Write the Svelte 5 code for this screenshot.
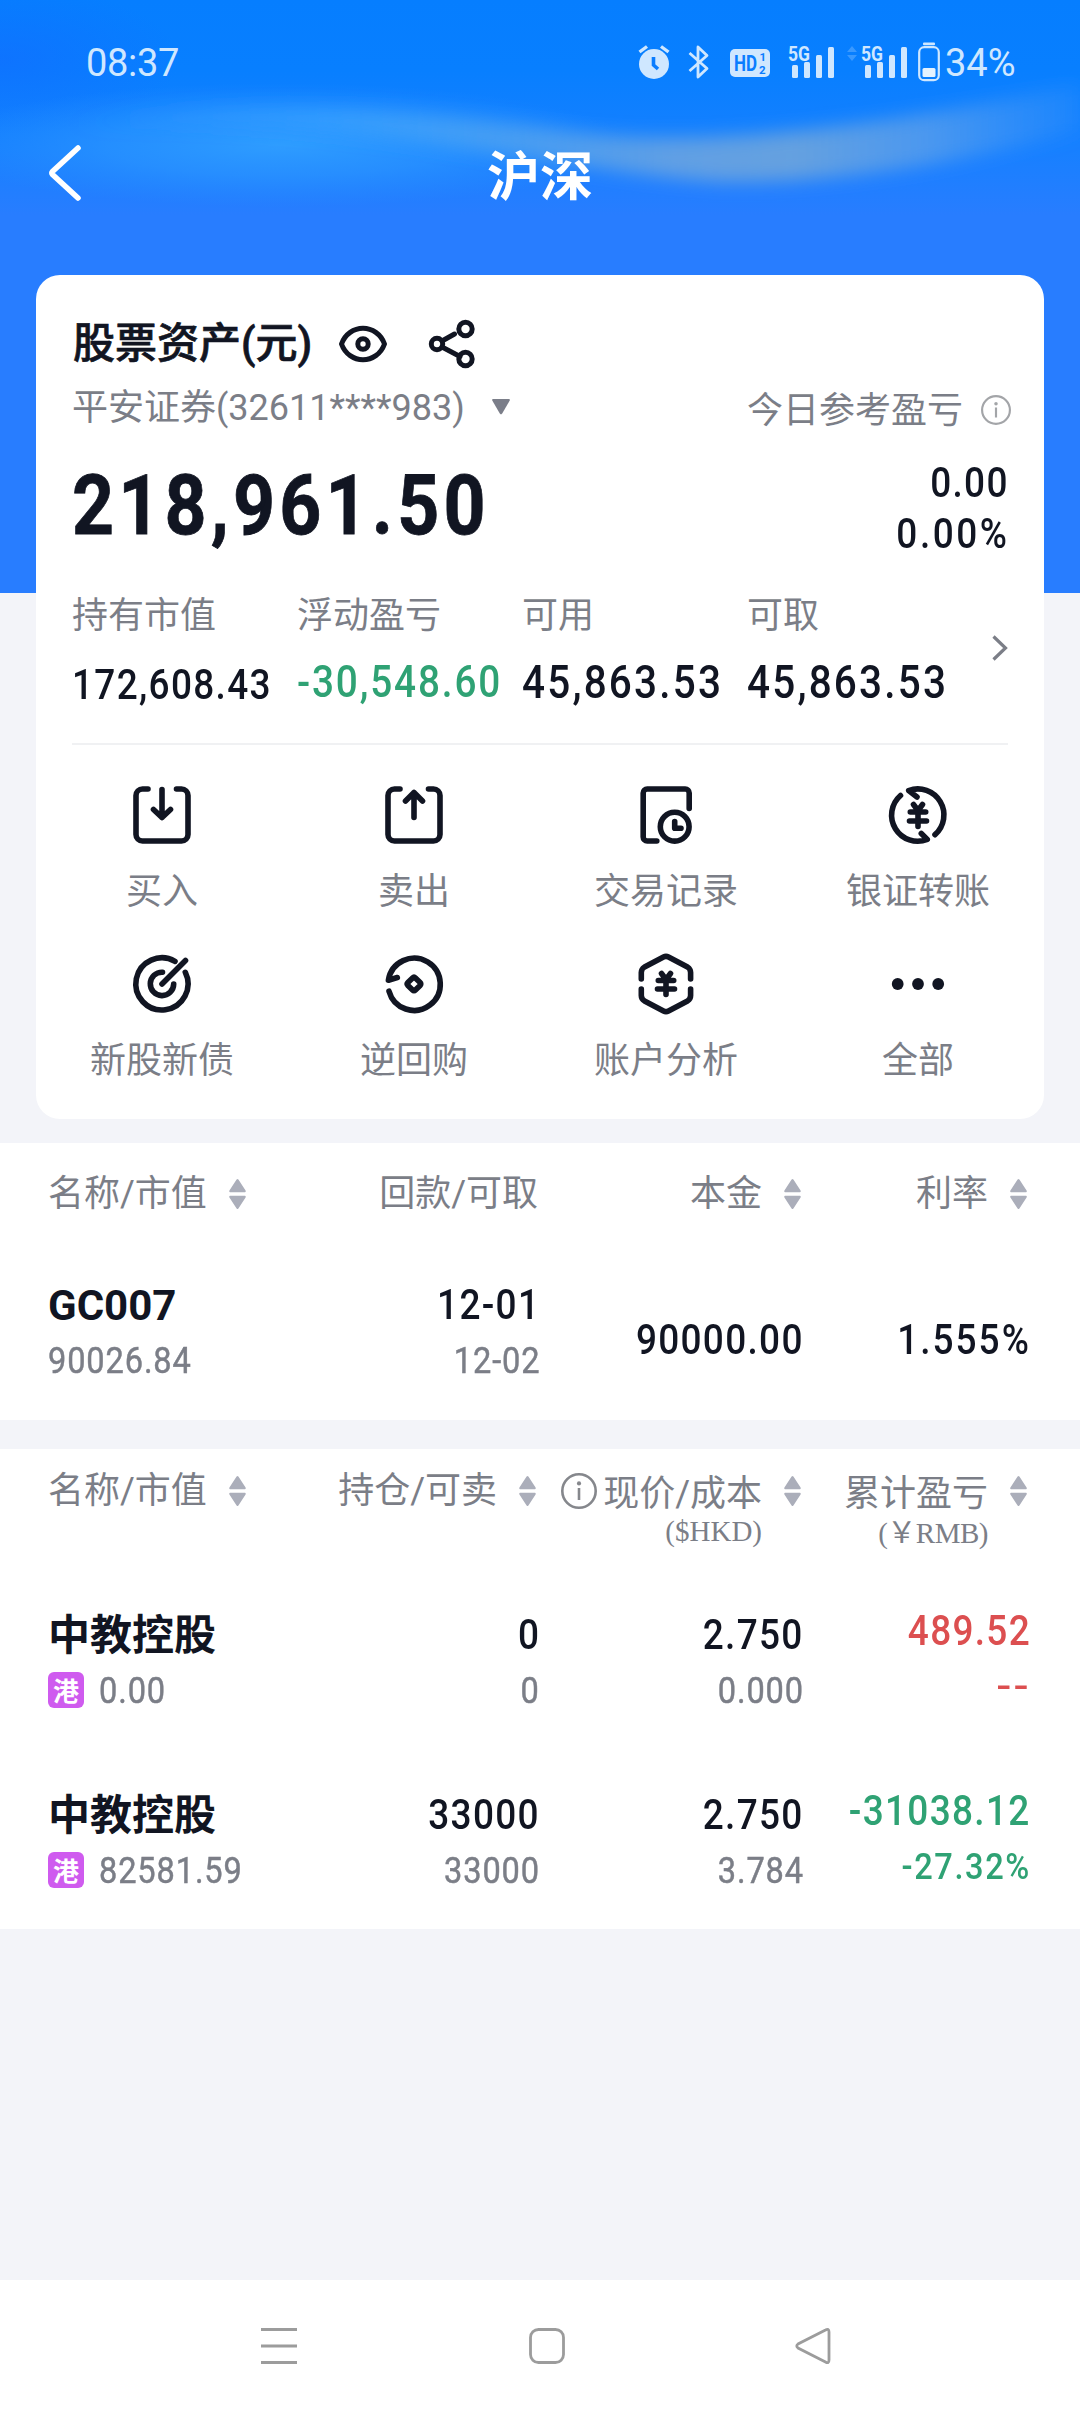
<script>
  const metrics = [
    { label: '持有市值', value: '172,608.43', size: 'small' },
    { label: '浮动盈亏', value: '-30,548.60', size: 'medium green' },
    { label: '可用', value: '45,863.53', size: 'large' },
    { label: '可取', value: '45,863.53', size: 'large' }
  ];

  const actions = [
    { icon: 'buy', label: '买入' },
    { icon: 'sell', label: '卖出' },
    { icon: 'record', label: '交易记录' },
    { icon: 'transfer', label: '银证转账' },
    { icon: 'target', label: '新股新债' },
    { icon: 'repo', label: '逆回购' },
    { icon: 'analysis', label: '账户分析' },
    { icon: 'more', label: '全部' }
  ];

  const holdings = [
    { name: '中教控股', value: '0.00', qty: '0', avail: '0', price: '2.750', cost: '0.000', pl: '489.52', rate: '--', tone: 'red' },
    { name: '中教控股', value: '82581.59', qty: '33000', avail: '33000', price: '2.750', cost: '3.784', pl: '-31038.12', rate: '-27.32%', tone: 'green' }
  ];
</script>

{#snippet sort()}
  <svg class="sort" width="17" height="30" viewBox="0 0 17 30">
    <path d="M7.6.6Q8.5-.5 9.4.6L16.6 11.6Q17.2 13.2 16 13.2H1Q-.2 13.2.4 11.6ZM7.6 29.4Q8.5 30.5 9.4 29.4L16.6 18.4Q17.2 16.8 16 16.8H1Q-.2 16.8.4 18.4Z" />
  </svg>
{/snippet}

{#snippet signal()}
  <svg class="signal" width="47" height="34" viewBox="0 0 47 34">
    <text x="0" y="16" textLength="22" lengthAdjust="spacingAndGlyphs">5G</text>
    <g fill="currentColor">
      <rect x="4" y="20" width="6" height="13" rx="1.5" />
      <rect x="16" y="17" width="6" height="16" rx="1.5" />
      <rect x="28" y="10" width="6" height="23" rx="1.5" />
      <rect x="40" y="2" width="6" height="31" rx="1.5" />
    </g>
  </svg>
{/snippet}

{#snippet info(size)}
  <svg class="info" width={size} height={size} viewBox="0 0 36 36">
    <circle cx="18" cy="18" r="16.7" />
    <path d="M18 15V27" />
    <circle class="dot" cx="18" cy="10.4" r="2.1" />
  </svg>
{/snippet}

<div class="screen">
  <header>
    <svg class="wave" width="1080" height="593" viewBox="0 0 1080 593">
      <defs>
        <linearGradient id="streak" x1="0" x2="1">
          <stop offset="0" stop-color="#39a5ff" stop-opacity="0" />
          <stop offset=".25" stop-color="#3fa8ff" stop-opacity=".5" />
          <stop offset=".6" stop-color="#78aadc" stop-opacity=".75" />
          <stop offset=".72" stop-color="#78a9d8" stop-opacity=".8" />
          <stop offset=".85" stop-color="#62a2e8" stop-opacity=".7" />
          <stop offset="1" stop-color="#4a9cf6" stop-opacity=".2" />
        </linearGradient>
        <radialGradient id="glow">
          <stop offset="0" stop-color="#31a0ff" stop-opacity=".9" />
          <stop offset=".5" stop-color="#2d98ff" stop-opacity=".6" />
          <stop offset="1" stop-color="#2890ff" stop-opacity="0" />
        </radialGradient>
        <radialGradient id="corner">
          <stop offset="0" stop-color="#1568ff" stop-opacity=".5" />
          <stop offset="1" stop-color="#1568ff" stop-opacity="0" />
        </radialGradient>
        <filter id="soft" x="-10%" y="-80%" width="120%" height="260%"><feGaussianBlur stdDeviation="9" /></filter>
      </defs>
      <ellipse cx="0" cy="60" rx="180" ry="75" fill="url(#corner)" />
      <ellipse cx="280" cy="145" rx="350" ry="62" fill="url(#glow)" />
      <path d="M60 126C220 94 400 108 560 130C680 148 850 134 1080 84L1080 130C980 160 840 184 720 182C600 174 480 146 340 132Q200 120 60 126Z" fill="url(#streak)" filter="url(#soft)" />
    </svg>

    <div class="status">
      <span class="time">08:37</span>
      <svg class="alarm" width="32" height="36" viewBox="0 0 32 36">
        <circle cx="16" cy="20" r="15" fill="currentColor" />
        <path d="M1.5 8 9 2.5M30.5 8 23 2.5" stroke="currentColor" stroke-width="3.4" />
        <path d="M15.5 13V21L20 25" fill="none" stroke="#0a7dff" stroke-width="3.6" />
      </svg>
      <svg class="bluetooth" width="22" height="36" viewBox="0 0 22 36">
        <path d="M1.5 9 19 24.5 10 33V3L19 11.5 1.5 27" fill="none" stroke="currentColor" stroke-width="2.8" stroke-linejoin="round" />
      </svg>
      <svg class="hd" width="40" height="28" viewBox="0 0 40 28">
        <rect width="40" height="28" rx="5" fill="currentColor" />
        <text x="4" y="22" font-size="22" textLength="23" lengthAdjust="spacingAndGlyphs">HD</text>
        <text x="29.5" y="12" font-size="11.5">1</text>
        <text x="29" y="25" font-size="11.5">2</text>
      </svg>
      {@render signal()}
      <svg class="traffic" width="10" height="36" viewBox="0 0 10 36">
        <path d="M5 2 10 8H0ZM5 17 10 11H0Z" fill="currentColor" opacity=".25" />
      </svg>
      {@render signal()}
      <svg class="battery" width="22" height="40" viewBox="0 0 22 40">
        <rect x="1.2" y="5.2" width="19.6" height="33" rx="5" fill="none" stroke="currentColor" stroke-width="2.2" />
        <rect x="5" y=".5" width="12" height="2.8" rx="1" fill="currentColor" />
        <rect x="4.5" y="26" width="13" height="9" rx="1.5" fill="#e4f2ff" />
      </svg>
      <span class="percent">34%</span>
    </div>

    <div class="titlebar">
      <svg width="34" height="58" viewBox="0 0 34 58">
        <path d="M30 4 4.5 27.5Q3 29 4.5 30.5L30 54" />
      </svg>
      <h1>沪深</h1>
    </div>
  </header>

  <section class="card">
    <div class="heading">
      <h2>股票资产(元)</h2>
      <svg class="line eye" width="48" height="38" viewBox="0 0 48 38">
        <path d="M2.5 19C6 9 15 3.2 24 3.2S42 9 45.500 19C42 29 33 34.800 24 34.800S6 29 2.500 19Z" />
        <circle cx="24" cy="19" r="5.200" />
      </svg>
      <svg class="line" width="46" height="48" viewBox="0 0 46 48">
        <circle cx="8" cy="24" r="5.700" />
        <circle cx="36.500" cy="9" r="6.700" />
        <circle cx="36.500" cy="39" r="6.700" />
        <path d="M13 21 25.500 14M13 27 31 36.500" />
      </svg>
    </div>

    <div class="account">
      <span class="broker">平安证券(32611****983)</span>
      <svg width="18" height="16" viewBox="0 0 18 16"><path d="M1.200 0H16.800Q18.500 0 17.600 1.800L10.200 14.600Q9 16.200 7.800 14.600L.4 1.800Q-.5 0 1.200 0Z" fill="#7b7e89" /></svg>
      <span class="today">今日参考盈亏</span>
      {@render info(30)}
    </div>

    <div class="total">
      <strong>218,961.50</strong>
      <div class="num"><div>0.00</div><div class="pct">0.00%</div></div>
    </div>

    <div class="metrics">
      {#each metrics as m}
        <div>
          <div class="label">{m.label}</div>
          <div class="num {m.size}">{m.value}</div>
        </div>
      {/each}
      <svg width="16" height="26" viewBox="0 0 16 26"><path d="M1.500 1.500 13.500 13 1.500 24.500" /></svg>
    </div>

    <div class="actions">
      {#each actions as a}
        <div class="action">
          <svg class="line" width="58" height="58" viewBox="0 0 58 58">
            {#if a.icon === 'buy'}
              <path d="M15 3H9.500A6.500 6.500 0 0 0 3 9.500V48.500A6.500 6.500 0 0 0 9.500 55H48.500A6.500 6.500 0 0 0 55 48.500V9.500A6.500 6.500 0 0 0 48.500 3H43.500M29 3.500V31.500M20.500 23.500 29 31.500 37.500 23.500" />
            {:else if a.icon === 'sell'}
              <path d="M15 3H9.500A6.500 6.500 0 0 0 3 9.500V48.500A6.500 6.500 0 0 0 9.500 55H48.500A6.500 6.500 0 0 0 55 48.500V9.500A6.500 6.500 0 0 0 48.500 3H43.500M29 31.500V6.500M20.500 15 29 6.500 37.500 15" />
            {:else if a.icon === 'record'}
              <path d="M19.800 55H10.200A4 4 0 0 1 6.200 51V7A4 4 0 0 1 10.200 3H48.200A4 4 0 0 1 52.200 7V22.500M37.700 35.500V42.300H44" />
              <circle cx="37.700" cy="40.700" r="14.400" />
            {:else if a.icon === 'transfer'}
              <path d="M11.500 9.500A26.100 26.100 0 0 0 38.300 53.400L32.300 47.500M46 48.700A26.100 26.100 0 0 0 19.700 4.600L28 11" />
              <path d="M24.500 18.500 29 24.500 33.500 18.500M21.300 26H36.700M20.500 35H37.500M29 26V40.500" />
            {:else if a.icon === 'target'}
              <path d="M42 6.300A26.100 26.100 0 1 0 52.300 17.300M29.500 17.200A11.700 11.700 0 1 0 40.700 29M29 29 52.500 5.500" />
            {:else if a.icon === 'repo'}
              <path d="M4 36.200A26.100 26.100 0 1 0 3.400 25.200L12.300 22.500" />
              <path d="M27.600 22.900Q29 21.500 30.400 22.900L35.100 27.600Q36.500 29 35.100 30.400L30.400 35.100Q29 36.500 27.600 35.100L22.900 30.400Q21.500 29 22.900 27.600Z" />
            {:else if a.icon === 'analysis'}
              <path d="M4.300 24V17.500Q4.300 14 7.500 12L26.500 2Q29 .7 31.500 2L50.500 12Q53.600 14 53.600 17.500V24M4.300 34V40.500Q4.300 44 7.500 46L26.500 56Q29 57.300 31.500 56L50.500 46Q53.600 44 53.600 40.500V34" />
              <path d="M24.500 18.500 29 24.500 33.500 18.500M21.300 25.500H36.700M20.500 34H37.500M29 26V39.500" />
            {:else}
              <g fill="#111522" stroke="none"><circle cx="8.700" cy="29" r="5.900" /><circle cx="29" cy="29" r="5.900" /><circle cx="49.200" cy="29" r="5.900" /></g>
            {/if}
          </svg>
          <span>{a.label}</span>
        </div>
      {/each}
    </div>
  </section>

  <section class="table repo">
    <div class="row head">
      <div><span>名称/市值</span>{@render sort()}</div>
      <div>回款/可取</div>
      <div><span>本金</span>{@render sort()}</div>
      <div><span>利率</span>{@render sort()}</div>
    </div>
    <div class="row body">
      <div><b class="code">GC007</b><small>90026.84</small></div>
      <div class="end"><span>12-01</span><small>12-02</small></div>
      <div class="end mid"><span>90000.00</span></div>
      <div class="end mid"><span class="pct">1.555%</span></div>
    </div>
  </section>

  <section class="table stocks">
    <div class="row head">
      <div><span>名称/市值</span>{@render sort()}</div>
      <div class="shift"><span>持仓/可卖</span>{@render sort()}</div>
      <div>
        {@render info(36)}
        <span class="unit">现价/成本<i>($HKD)</i></span>{@render sort()}
      </div>
      <div><span class="unit">累计盈亏<i class="lower">(￥RMB)</i></span>{@render sort()}</div>
    </div>
    {#each holdings as h}
      <div class="row body">
        <div><b>{h.name}</b><div class="tagged"><em>港</em><small>{h.value}</small></div></div>
        <div class="end"><span>{h.qty}</span><small>{h.avail}</small></div>
        <div class="end"><span>{h.price}</span><small>{h.cost}</small></div>
        <div class="end profit {h.tone}"><span>{h.pl}</span><small class:dashes={h.rate === '--'}>{h.rate}</small></div>
      </div>
    {/each}
  </section>

  <nav>
    <svg width="36" height="38" viewBox="0 0 36 38"><path d="M0 2.500H36M0 19H36M0 35.500H36" /></svg>
    <svg width="36" height="38" viewBox="0 0 36 38"><rect x="1.500" y="2.500" width="33" height="33" rx="8" /></svg>
    <svg width="36" height="38" viewBox="0 0 36 38"><path d="M34 5Q34 1 30.500 3L3 17Q.5 19 3 21L30.500 35Q34 37 34 33Z" /></svg>
  </nav>
</div>

<style>
  :global(body) {
    background: #f3f4f9;
  }
  .screen {
    width: 1080px;
    height: 2412px;
    display: flex;
    flex-direction: column;
    overflow: hidden;
    background: #f3f4f9;
    color: #111522;
    font-family: Roboto, 'Noto Sans CJK SC', sans-serif;
  }
  svg {
    display: block;
    flex: none;
    overflow: visible;
  }
  h1,
  h2 {
    margin: 0;
  }

  header {
    position: relative;
    flex: none;
    height: 593px;
    margin-bottom: -318px;
    background: linear-gradient(#067eff 0, #087fff 70px, #1780ff 150px, #287dff 215px);
  }
  .wave {
    position: absolute;
    inset: 0;
  }
  .status {
    position: relative;
    display: flex;
    align-items: center;
    height: 124px;
    padding-left: 86px;
    color: #cfe7ff;
    font-size: 38px;
  }
  .time {
    width: 552px;
    padding-top: 1px;
    letter-spacing: -0.3px;
  }
  .bluetooth {
    margin-left: 18px;
  }
  .hd {
    margin: 2px 0 0 20px;
    fill: #0a7dff;
    font-weight: 700;
  }
  .signal {
    margin-left: 18px;
    fill: currentColor;
    font-size: 21px;
    font-weight: 700;
  }
  .traffic {
    margin: 0 -14px 0 12px;
  }
  .battery {
    margin: 0 5px 0 10px;
  }
  .percent {
    padding-top: 1px;
  }
  .titlebar {
    position: relative;
    display: grid;
    grid-template-columns: 1fr auto 1fr;
    align-items: center;
    height: 98px;
    padding: 0 48px;
  }
  .titlebar svg {
    margin-top: -5px;
    fill: none;
    stroke: #fff;
    stroke-width: 5.5;
    stroke-linecap: round;
  }
  h1 {
    color: #fff;
    font-size: 53px;
    line-height: 98px;
    padding-top: 5px;
  }

  .card {
    position: relative;
    flex: none;
    box-sizing: border-box;
    height: 844px;
    margin: 0 36px 24px;
    padding-top: 45px;
    border-radius: 24px;
    background: #fff;
  }
  .line {
    fill: none;
    stroke: #111522;
    stroke-width: 5.6;
    stroke-linecap: round;
    stroke-linejoin: round;
  }
  .heading {
    display: flex;
    align-items: center;
    gap: 42px;
    height: 48px;
    padding-left: 37px;
  }
  h2 {
    width: 224px;
    white-space: nowrap;
    font-size: 42px;
    font-weight: 500;
    line-height: 48px;
    -webkit-text-stroke: 0.7px;
  }
  .eye,
  .heading .line {
    stroke-width: 5;
  }
  .account {
    display: flex;
    align-items: center;
    height: 44px;
    margin-top: 18px;
    padding: 0 33px 0 36px;
    color: #7b7e87;
    font-size: 36px;
    line-height: 44px;
  }
  .broker {
    width: 420px;
  }
  .account > svg:not(.info) {
    margin-top: -3px;
  }
  .today {
    margin-left: auto;
    padding-top: 5px;
  }
  .info {
    fill: none;
    stroke: #85878c;
    stroke-width: 2.6;
  }
  .info .dot {
    fill: #85878c;
    stroke: none;
  }
  .account .info {
    margin: 4px 0 0 18px;
    opacity: 0.75;
  }
  .total {
    display: flex;
    justify-content: space-between;
    align-items: center;
    height: 102px;
    margin-top: 27px;
    padding: 0 35px 0 36px;
  }
  /* Figures are set slightly condensed with open tracking. */
  strong {
    padding-bottom: 5px;
    font-size: 84px;
    line-height: 90px;
    letter-spacing: 4.8px;
    transform: scaleX(0.873);
    transform-origin: left;
    -webkit-text-stroke: 0.8px;
  }
  .num {
    font-weight: 500;
    font-size: 42px;
    letter-spacing: 1.5px;
    line-height: 51px;
    text-align: right;
    transform: scaleX(0.88);
    transform-origin: right;
  }
  .total .pct {
    letter-spacing: 2.9px;
    margin-right: -1px;
  }
  .metrics {
    display: grid;
    grid-template-columns: repeat(4, 225px) 16px;
    height: 116px;
    margin: 0 36px;
    padding: 35px 0 33px;
    border-bottom: 2px solid #f0f1f3;
  }
  .metrics > svg {
    margin: 41px 0 0 20px;
    fill: none;
    stroke: #7b7e87;
    stroke-width: 3.2;
  }
  .label {
    color: #7b7e87;
    font-size: 36px;
    line-height: 44px;
  }
  .metrics .num {
    padding-top: 19px;
    line-height: 50px;
    text-align: left;
    white-space: nowrap;
    transform-origin: left;
  }
  .metrics .small {
    padding-top: 22px;
    letter-spacing: 1.5px;
  }
  .metrics .medium {
    font-size: 44px;
    letter-spacing: 2.1px;
  }
  .metrics .large {
    font-size: 46px;
    letter-spacing: 2.5px;
  }
  .green,
  .profit.green * {
    color: #2fa274;
  }
  .profit.red * {
    color: #dc4f50;
  }
  .actions {
    display: grid;
    grid-template-columns: repeat(4, 1fr);
    row-gap: 42px;
    padding-top: 41px;
  }
  .action {
    display: flex;
    flex-direction: column;
    align-items: center;
    gap: 26px;
    color: #7b7e87;
    font-size: 36px;
    line-height: 44px;
  }
  .actions {
    row-gap: 41px;
  }

  .table {
    flex: none;
    box-sizing: border-box;
    background: #fff;
  }
  .repo {
    height: 277px;
    margin-bottom: 29px;
  }
  .stocks {
    height: 480px;
  }
  .row {
    display: grid;
    grid-template-columns: 199px 291px 264px 227px;
    padding-left: 48px;
  }
  .head {
    color: #7b7e87;
    font-size: 36px;
    line-height: 44px;
  }
  .head > div {
    display: flex;
    justify-content: flex-end;
    white-space: nowrap;
    align-items: flex-start;
  }
  .head > div:first-child {
    justify-content: space-between;
  }
  .head > .shift {
    padding-right: 1px;
  }
  .sort {
    margin: 7px 1px 0 22px;
    fill: #abaeba;
  }
  .head > div:last-child .sort {
    margin-right: 2px;
  }
  .repo .head {
    height: 121px;
    padding-top: 29px;
    box-sizing: border-box;
  }
  .stocks .head {
    height: 155px;
    padding-top: 20px;
    box-sizing: border-box;
  }
  .head .info {
    margin: 4px 6px 0 -20px;
  }
  .unit {
    display: flex;
    flex-direction: column;
    align-items: flex-end;
    padding-top: 3px;
  }
  i {
    margin-top: -3px;
    font: 29px/36px 'Liberation Serif', 'Noto Sans CJK SC', serif;
  }
  i.lower {
    margin-top: -1px;
    letter-spacing: -0.5px;
  }
  .body {
    box-sizing: border-box;
    height: 180px;
    padding-top: 6px;
    font-size: 42px;
    font-weight: 500;
    line-height: 50px;
    letter-spacing: 1.5px;
  }
  .repo .body {
    padding-top: 16px;
  }
  .body > div {
    display: flex;
    flex-direction: column;
    align-items: flex-start;
    white-space: nowrap;
  }
  .body > .end {
    align-items: flex-end;
  }
  .end > * {
    margin-right: -2px;
    transform: scaleX(0.88);
    transform-origin: right;
  }
  .end > .pct {
    letter-spacing: 2.3px;
  }
  .body .mid {
    padding-top: 35px;
  }
  b {
    font-weight: 700;
    letter-spacing: 0;
    padding-top: 1px;
  }
  b + small {
    margin-top: 6px;
  }
  small {
    margin-top: 7px;
    color: #7b7e87;
    font-size: 37px;
    font-weight: 400;
    line-height: 48px;
    letter-spacing: 1px;
    -webkit-text-stroke: 0.5px;
    transform: scaleX(0.88);
    transform-origin: left;
  }
  .profit small {
    font-weight: 500;
    letter-spacing: 1.8px;
    -webkit-text-stroke: 0;
  }
  .profit .dashes {
    transform: scaleX(1.2);
  }
  .tagged {
    display: flex;
    align-items: center;
    gap: 15px;
    margin-top: 6px;
  }
  .tagged small {
    margin: 0;
  }
  em {
    width: 36px;
    height: 36px;
    margin-top: -3px;
    border-radius: 6px;
    background: #cf5bef;
    color: #fff;
    font: 700 26px/35px 'Noto Sans CJK SC', sans-serif;
    text-align: center;
    letter-spacing: 0;
  }
  .stocks .body .profit {
    margin-top: -4px;
  }

  nav {
    display: flex;
    gap: 232px;
    box-sizing: border-box;
    height: 132px;
    margin-top: auto;
    padding: 47px 0 0 261px;
    background: #fff;
  }
  nav svg {
    fill: none;
    stroke: #9c9c9c;
    stroke-width: 2.800;
  }
  nav svg:last-child {
    margin-left: -2px;
  }
</style>
